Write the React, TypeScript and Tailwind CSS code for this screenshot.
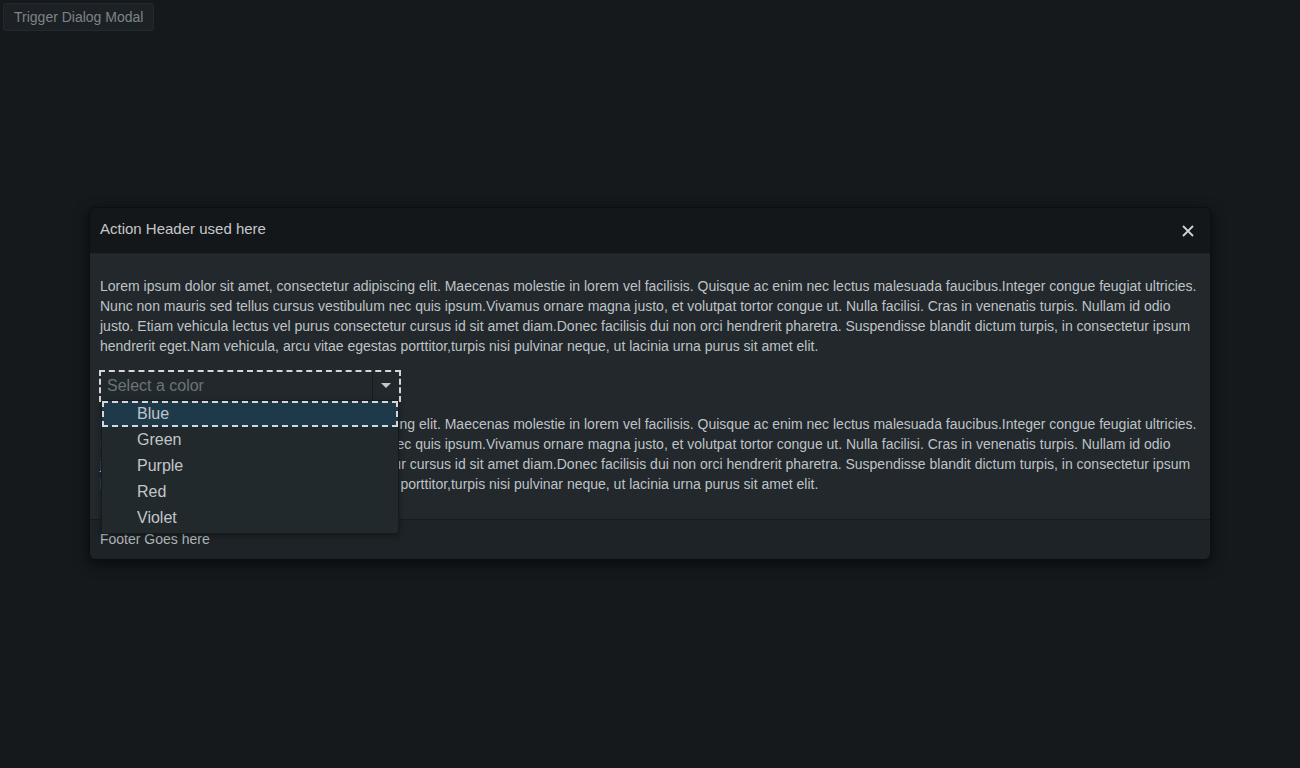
const font = "font-['Liberation_Sans',Arial,sans-serif]";

const lorem =
  "Lorem ipsum dolor sit amet, consectetur adipiscing elit. Maecenas molestie in lorem vel facilisis. Quisque ac enim nec lectus malesuada faucibus.Integer congue feugiat ultricies. Nunc non mauris sed tellus cursus vestibulum nec quis ipsum.Vivamus ornare magna justo, et volutpat tortor congue ut. Nulla facilisi. Cras in venenatis turpis. Nullam id odio justo. Etiam vehicula lectus vel purus consectetur cursus id sit amet diam.Donec facilisis dui non orci hendrerit pharetra. Suspendisse blandit dictum turpis, in consectetur ipsum hendrerit eget.Nam vehicula, arcu vitae egestas porttitor,turpis nisi pulvinar neque, ut lacinia urna purus sit amet elit.";

const colors = ["Blue", "Green", "Purple", "Red", "Violet"];

function ColorSelect() {
  return (
    <div className="relative ml-[1px] w-[298px]">
      <div className="flex h-[28px] items-stretch outline-2 outline-dashed outline-[#d4d6d8] outline-offset-0 bg-[#22292d]">
        <span className="flex-1 flex items-center pl-[6px] text-[16px] text-[#6b7378]">Select a color</span>
        <span className="w-[27px] border-l border-[#171b1e] flex items-center justify-center">
          <svg width="10" height="6" viewBox="0 0 10 6">
            <path d="M0 0h10L5 5z" fill="#c4c8ca" />
          </svg>
        </span>
      </div>
      <ul className="absolute left-0 right-0 top-[28px] z-10 bg-[#22292d] border border-[#171b1e] pb-[2px] rounded-b-[3px] shadow-[0_2px_6px_rgba(0,0,0,0.35)]">
        {colors.map((c, i) => (
          <li
            key={c}
            className={
              "h-[26px] flex items-center pl-[35px] text-[16px] text-[#c2c6c8] " +
              (i === 0 ? "bg-[#1e3a4a] outline-2 outline-dashed outline-[#d4d6d8] -outline-offset-2" : "")
            }
          >
            {c}
          </li>
        ))}
      </ul>
    </div>
  );
}

export default function App() {
  return (
    <div className={`min-h-[768px] bg-[#15191c] ${font}`}>
      <div className="p-[3px]">
        <button className="h-[28px] px-[10px] text-[14px] text-[#7e8488] bg-[#1c2125] border border-[#25292d] rounded-[3px]">
          Trigger Dialog Modal
        </button>
      </div>

      <div className="mx-[89px] mt-[173px] rounded-[6px] border border-[#0c0e10] shadow-[0_4px_14px_rgba(0,0,0,0.6)]">
        <div className="h-[45px] flex items-center justify-between px-[10px] bg-[#141719] rounded-t-[6px]">
          <h2 className="text-[15px] text-[#c4c7c9] -mt-[2px]">Action Header used here</h2>
          <svg width="12" height="12" viewBox="0 0 12 12" className="mr-[6px] mt-[1px]">
            <path d="M1 1l10 10M11 1L1 11" stroke="#d0d3d5" strokeWidth="1.8" />
          </svg>
        </div>
        <div className="bg-[#22282c] px-[10px] pt-[22px] pb-[25px] border-t border-[#1d2225]">
          <p className="text-[14px] leading-[20px] text-[#bfc3c6]">{lorem}</p>
          <div className="mt-[16px] mb-[14px]">
            <ColorSelect />
          </div>
          <p className="text-[14px] leading-[20px] text-[#bfc3c6]">{lorem}</p>
        </div>
        <div className="h-[40px] flex items-center px-[10px] bg-[#1e2327] border-t border-[#181c1f] rounded-b-[6px]">
          <span className="text-[14px] text-[#b4b8bb]">Footer Goes here</span>
        </div>
      </div>
    </div>
  );
}
